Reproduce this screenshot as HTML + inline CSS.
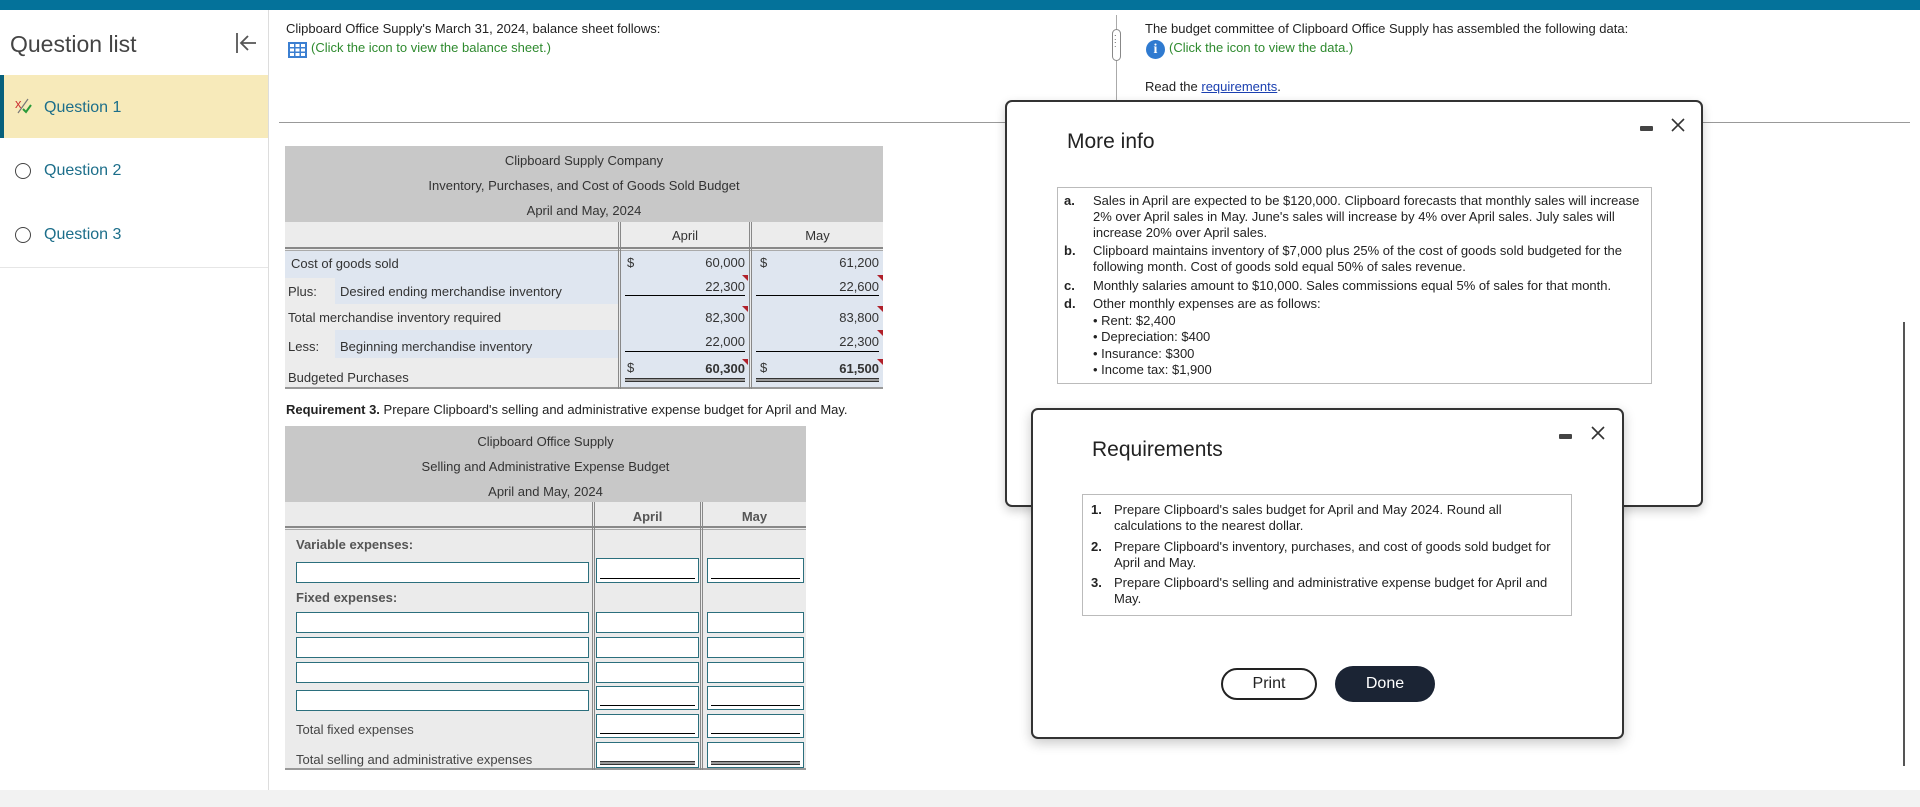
<!DOCTYPE html>
<html><head><meta charset="utf-8"><style>
*{box-sizing:border-box;margin:0;padding:0}
body{width:1920px;height:807px;position:relative;overflow:hidden;background:#fff;font-family:"Liberation Sans",Arial,sans-serif;font-size:13px;color:#222}
.a{position:absolute}
.t{position:absolute;white-space:nowrap;line-height:16px}
.inp{position:absolute;background:#fff;border:1px solid #2b6f7d;height:21px}
.ul{position:absolute;left:3px;right:3px;bottom:3px;border-bottom:1px solid #000}
.dl{position:absolute;left:3px;right:3px;bottom:2px;height:4px;border-top:1px solid #333;border-bottom:1px solid #333;background:#999}
.tri{position:absolute;width:0;height:0;border-top:6px solid #b0202a;border-left:6px solid transparent}
</style></head><body>
<div class="a" style="left:0;top:0;width:1920px;height:10px;background:#04729a"></div>
<div class="a" style="left:0;top:790px;width:1920px;height:17px;background:#f2f2f2"></div>
<!-- sidebar -->
<div class="a" style="left:268px;top:10px;width:1px;height:780px;background:#ddd"></div>
<div class="t" style="left:10px;top:30px;font-size:23px;line-height:28px;color:#444">Question list</div>
<svg class="a" style="left:234px;top:31px" width="26" height="24" viewBox="0 0 26 24"><path d="M3 2v20M22 12H7M14 5l-7 7 7 7" stroke="#555" stroke-width="1.8" fill="none"/></svg>
<div class="a" style="left:0;top:75px;width:268px;height:63px;background:#f7eaba"></div>
<div class="a" style="left:0;top:75px;width:4px;height:63px;background:#07607c"></div>
<div class="t" style="left:15px;top:96px;font-size:13px;color:#c33">x</div>
<svg class="a" style="left:15px;top:98px" width="18" height="16"><path d="M13 1L3 15" stroke="#777" stroke-width="1.2"/><path d="M8 11l3 3 5-7" stroke="#2a9a3a" stroke-width="2" fill="none"/></svg>
<div class="t" style="left:44px;top:98px;font-size:16px;line-height:20px;color:#1c6e8a">Question 1</div>
<div class="a" style="left:15px;top:163px;width:16px;height:16px;border:1.6px solid #444;border-radius:50%"></div>
<div class="t" style="left:44px;top:161px;font-size:16px;line-height:20px;color:#1c6e8a">Question 2</div>
<div class="a" style="left:15px;top:227px;width:16px;height:16px;border:1.6px solid #444;border-radius:50%"></div>
<div class="t" style="left:44px;top:225px;font-size:16px;line-height:20px;color:#1c6e8a">Question 3</div>
<div class="a" style="left:0;top:267px;width:268px;height:1px;background:#e6e6e6"></div>
<!-- main top -->
<div class="t" style="left:286px;top:21px">Clipboard Office Supply's March 31, 2024, balance sheet follows:</div>
<svg class="a" style="left:288px;top:42px" width="19" height="16"><rect width="19" height="16" fill="#3b7fd1"/><g fill="#fff"><rect x="2" y="2" width="4" height="3"/><rect x="7.5" y="2" width="4" height="3"/><rect x="13" y="2" width="4" height="3"/><rect x="2" y="6.5" width="4" height="3"/><rect x="7.5" y="6.5" width="4" height="3"/><rect x="13" y="6.5" width="4" height="3"/><rect x="2" y="11" width="4" height="3"/><rect x="7.5" y="11" width="4" height="3"/><rect x="13" y="11" width="4" height="3"/></g></svg>
<div class="t" style="left:311px;top:40px;color:#2e8a2e">(Click the icon to view the balance sheet.)</div>
<div class="a" style="left:279px;top:122px;width:1631px;height:1px;background:#999"></div>
<div class="a" style="left:1116px;top:15px;width:1px;height:107px;background:#aaa"></div>
<div class="a" style="left:1112px;top:29px;width:9px;height:32px;border:1px solid #888;border-radius:5px;background:#fff"></div>
<div class="t" style="left:1114px;top:34px;font-size:9px;line-height:7px;color:#555">:<br>:</div>
<div class="t" style="left:1145px;top:21px">The budget committee of Clipboard Office Supply has assembled the following data:</div>
<div class="a" style="left:1146px;top:40px;width:19px;height:19px;border-radius:50%;background:#2f7ad0;color:#fff;font-weight:bold;font-size:14px;text-align:center;line-height:19px;font-family:'Liberation Serif',serif">i</div>
<div class="t" style="left:1169px;top:40px;color:#2e8a2e">(Click the icon to view the data.)</div>
<div class="t" style="left:1145px;top:79px">Read the <span style="color:#1a3fb0;text-decoration:underline">requirements</span>.</div>
<!-- table 1 -->
<div class="a" style="left:285px;top:146px;width:598px;height:76px;background:#c8c8c8"></div>
<div class="t" style="left:285px;width:598px;text-align:center;top:153px;color:#333">Clipboard Supply Company</div>
<div class="t" style="left:285px;width:598px;text-align:center;top:178px;color:#333">Inventory, Purchases, and Cost of Goods Sold Budget</div>
<div class="t" style="left:285px;width:598px;text-align:center;top:203px;color:#333">April and May, 2024</div>
<div class="a" style="left:285px;top:222px;width:598px;height:167px;background:#ececec;border-bottom:2px solid #999"></div>
<div class="a" style="left:285px;top:247px;width:598px;height:4px;border-top:2px solid #888;border-bottom:1px solid #aaa"></div>
<div class="a" style="left:618px;top:222px;width:3px;height:167px;border-left:1px solid #888;border-right:1px solid #888"></div>
<div class="a" style="left:749px;top:222px;width:3px;height:167px;border-left:1px solid #888;border-right:1px solid #888"></div>
<div class="t" style="left:621px;width:128px;text-align:center;top:228px;color:#333">April</div>
<div class="t" style="left:752px;width:131px;text-align:center;top:228px;color:#333">May</div>
<div class="a" style="left:285px;top:251px;width:333px;height:27px;background:#dfe6f0"></div>
<div class="a" style="left:621px;top:251px;width:128px;height:136px;background:#dfe6f0"></div>
<div class="a" style="left:752px;top:251px;width:131px;height:136px;background:#dfe6f0"></div>
<div class="a" style="left:335px;top:278px;width:283px;height:26px;background:#dfe6f0"></div>
<div class="a" style="left:335px;top:330px;width:283px;height:28px;background:#dfe6f0"></div>
<div class="t" style="left:291px;top:256px;color:#333">Cost of goods sold</div>
<div class="t" style="left:288px;top:284px;color:#333">Plus:</div><div class="t" style="left:340px;top:284px;color:#333">Desired ending merchandise inventory</div>
<div class="t" style="left:288px;top:310px;color:#333">Total merchandise inventory required</div>
<div class="t" style="left:288px;top:339px;color:#333">Less:</div><div class="t" style="left:340px;top:339px;color:#333">Beginning merchandise inventory</div>
<div class="t" style="left:288px;top:370px;color:#333">Budgeted Purchases</div>
<div class="t" style="left:627px;top:255px;color:#333">$</div><div class="t" style="left:760px;top:255px;color:#333">$</div>
<div class="t" style="left:627px;top:360px;color:#333">$</div><div class="t" style="left:760px;top:360px;color:#333">$</div>
<div class="t" style="left:640px;width:105px;text-align:right;top:255px;color:#333">60,000</div>
<div class="t" style="left:770px;width:109px;text-align:right;top:255px;color:#333">61,200</div>
<div class="t" style="left:640px;width:105px;text-align:right;top:279px;color:#333">22,300</div>
<div class="t" style="left:770px;width:109px;text-align:right;top:279px;color:#333">22,600</div>
<div class="t" style="left:640px;width:105px;text-align:right;top:310px;color:#333">82,300</div>
<div class="t" style="left:770px;width:109px;text-align:right;top:310px;color:#333">83,800</div>
<div class="t" style="left:640px;width:105px;text-align:right;top:334px;color:#333">22,000</div>
<div class="t" style="left:770px;width:109px;text-align:right;top:334px;color:#333">22,300</div>
<div class="t" style="left:640px;width:105px;text-align:right;top:361px;font-weight:bold;color:#333">60,300</div>
<div class="t" style="left:770px;width:109px;text-align:right;top:361px;font-weight:bold;color:#333">61,500</div>
<div class="a" style="left:625px;top:295px;width:120px;border-top:1px solid #000"></div>
<div class="a" style="left:756px;top:295px;width:123px;border-top:1px solid #000"></div>
<div class="a" style="left:625px;top:351px;width:120px;border-top:1px solid #000"></div>
<div class="a" style="left:756px;top:351px;width:123px;border-top:1px solid #000"></div>
<div class="a" style="left:625px;top:378px;width:120px;height:4px;border-top:1px solid #333;border-bottom:1px solid #333;background:#999"></div>
<div class="a" style="left:756px;top:378px;width:123px;height:4px;border-top:1px solid #333;border-bottom:1px solid #333;background:#999"></div>
<div class="tri" style="left:742px;top:275px"></div><div class="tri" style="left:877px;top:275px"></div>
<div class="tri" style="left:742px;top:306px"></div><div class="tri" style="left:877px;top:306px"></div>
<div class="tri" style="left:877px;top:330px"></div>
<div class="tri" style="left:742px;top:359px"></div><div class="tri" style="left:877px;top:359px"></div>
<!-- req 3 -->
<div class="t" style="left:286px;top:402px"><b>Requirement 3.</b> Prepare Clipboard's selling and administrative expense budget for April and May.</div>
<div class="a" style="left:285px;top:426px;width:521px;height:76px;background:#c8c8c8"></div>
<div class="t" style="left:285px;width:521px;text-align:center;top:434px;color:#333">Clipboard Office Supply</div>
<div class="t" style="left:285px;width:521px;text-align:center;top:459px;color:#333">Selling and Administrative Expense Budget</div>
<div class="t" style="left:285px;width:521px;text-align:center;top:484px;color:#333">April and May, 2024</div>
<div class="a" style="left:285px;top:502px;width:521px;height:268px;background:#ebebeb;border-bottom:2px solid #999"></div>
<div class="a" style="left:285px;top:526px;width:521px;height:4px;border-top:2px solid #888;border-bottom:1px solid #aaa"></div>
<div class="a" style="left:592px;top:502px;width:3px;height:268px;border-left:1px solid #888;border-right:1px solid #888"></div>
<div class="a" style="left:700px;top:502px;width:3px;height:268px;border-left:1px solid #888;border-right:1px solid #888"></div>
<div class="t" style="left:595px;width:105px;text-align:center;top:509px;font-weight:bold;color:#555">April</div>
<div class="t" style="left:703px;width:103px;text-align:center;top:509px;font-weight:bold;color:#555">May</div>
<div class="t" style="left:296px;top:537px;font-weight:bold;color:#555">Variable expenses:</div>
<div class="t" style="left:296px;top:590px;font-weight:bold;color:#555">Fixed expenses:</div>
<div class="t" style="left:296px;top:722px;color:#444">Total fixed expenses</div>
<div class="t" style="left:296px;top:752px;color:#444">Total selling and administrative expenses</div>
<div class="inp" style="left:296px;top:562px;width:293px"></div>
<div class="inp" style="left:596px;top:558px;width:103px;height:25px"><div class="ul"></div></div>
<div class="inp" style="left:707px;top:558px;width:97px;height:25px"><div class="ul"></div></div>
<div class="inp" style="left:296px;top:612px;width:293px"></div>
<div class="inp" style="left:596px;top:612px;width:103px"></div><div class="inp" style="left:707px;top:612px;width:97px"></div>
<div class="inp" style="left:296px;top:637px;width:293px"></div>
<div class="inp" style="left:596px;top:637px;width:103px"></div><div class="inp" style="left:707px;top:637px;width:97px"></div>
<div class="inp" style="left:296px;top:662px;width:293px"></div>
<div class="inp" style="left:596px;top:662px;width:103px"></div><div class="inp" style="left:707px;top:662px;width:97px"></div>
<div class="inp" style="left:296px;top:690px;width:293px"></div>
<div class="inp" style="left:596px;top:686px;width:103px;height:24px"><div class="ul"></div></div>
<div class="inp" style="left:707px;top:686px;width:97px;height:24px"><div class="ul"></div></div>
<div class="inp" style="left:596px;top:714px;width:103px;height:24px"><div class="ul"></div></div>
<div class="inp" style="left:707px;top:714px;width:97px;height:24px"><div class="ul"></div></div>
<div class="inp" style="left:596px;top:742px;width:103px;height:26px"><div class="dl"></div></div>
<div class="inp" style="left:707px;top:742px;width:97px;height:26px"><div class="dl"></div></div>
<!-- scrollbar -->
<div class="a" style="left:1903px;top:322px;width:2px;height:444px;background:#555"></div>
<!-- More info modal -->
<div class="a" style="left:1005px;top:100px;width:698px;height:407px;background:#fff;border:2px solid #333;border-radius:7px;box-shadow:0 4px 10px rgba(0,0,0,.2)"></div>
<div class="t" style="left:1067px;top:130px;font-size:21px;line-height:24px;color:#222">More info</div>
<div class="a" style="left:1640px;top:126px;width:13px;height:5px;background:#444;border-radius:1px"></div>
<svg class="a" style="left:1670px;top:117px" width="16" height="16"><path d="M2 2l12 12M14 2L2 14" stroke="#333" stroke-width="1.6"/></svg>
<div class="a" style="left:1057px;top:187px;width:595px;height:197px;border:1px solid #bbb"></div>
<div class="t" style="left:1064px;top:193px;font-weight:bold">a.</div>
<div class="t" style="left:1093px;top:193px">Sales in April are expected to be $120,000. Clipboard forecasts that monthly sales will increase<br>2% over April sales in May. June's sales will increase by 4% over April sales. July sales will<br>increase 20% over April sales.</div>
<div class="t" style="left:1064px;top:243px;font-weight:bold">b.</div>
<div class="t" style="left:1093px;top:243px">Clipboard maintains inventory of $7,000 plus 25% of the cost of goods sold budgeted for the<br>following month. Cost of goods sold equal 50% of sales revenue.</div>
<div class="t" style="left:1064px;top:278px;font-weight:bold">c.</div>
<div class="t" style="left:1093px;top:278px">Monthly salaries amount to $10,000. Sales commissions equal 5% of sales for that month.</div>
<div class="t" style="left:1064px;top:296px;font-weight:bold">d.</div>
<div class="t" style="left:1093px;top:296px;line-height:16.5px">Other monthly expenses are as follows:<br>• Rent: $2,400<br>• Depreciation: $400<br>• Insurance: $300<br>• Income tax: $1,900</div>
<!-- Requirements modal -->
<div class="a" style="left:1031px;top:408px;width:593px;height:331px;background:#fff;border:2px solid #333;border-radius:7px;box-shadow:0 4px 12px rgba(0,0,0,.22)"></div>
<div class="t" style="left:1092px;top:438px;font-size:21px;line-height:24px;color:#222">Requirements</div>
<div class="a" style="left:1559px;top:434px;width:13px;height:5px;background:#444;border-radius:1px"></div>
<svg class="a" style="left:1590px;top:425px" width="16" height="16"><path d="M2 2l12 12M14 2L2 14" stroke="#333" stroke-width="1.6"/></svg>
<div class="a" style="left:1082px;top:494px;width:490px;height:122px;border:1px solid #bbb"></div>
<div class="t" style="left:1091px;top:502px;font-weight:bold">1.</div>
<div class="t" style="left:1114px;top:502px">Prepare Clipboard's sales budget for April and May 2024. Round all<br>calculations to the nearest dollar.</div>
<div class="t" style="left:1091px;top:539px;font-weight:bold">2.</div>
<div class="t" style="left:1114px;top:539px">Prepare Clipboard's inventory, purchases, and cost of goods sold budget for<br>April and May.</div>
<div class="t" style="left:1091px;top:575px;font-weight:bold">3.</div>
<div class="t" style="left:1114px;top:575px">Prepare Clipboard's selling and administrative expense budget for April and<br>May.</div>
<div class="a" style="left:1221px;top:668px;width:96px;height:32px;border:2px solid #222;border-radius:16px;text-align:center;line-height:28px;font-size:16px;color:#222">Print</div>
<div class="a" style="left:1335px;top:666px;width:100px;height:36px;background:#1b2434;border-radius:18px;text-align:center;line-height:36px;font-size:16px;color:#fff">Done</div>
</body></html>
